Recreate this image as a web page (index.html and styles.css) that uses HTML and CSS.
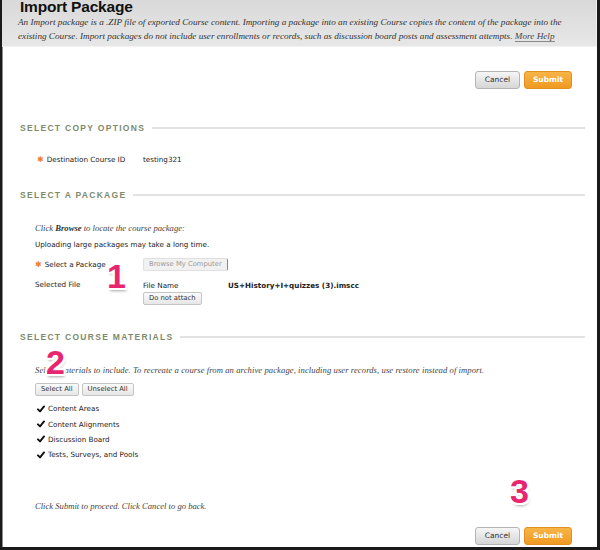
FILE: index.html
```html
<!DOCTYPE html>
<html>
<head>
<meta charset="utf-8">
<link rel="stylesheet" href="styles.css">
</head>
<body>
<div class="frame">
  <header class="head">
    <h1 class="title">Import Package</h1>
    <p class="intro">An Import package is a .ZIP file of exported Course content. Importing a package into an existing Course copies the content of the package into the<br>existing Course. Import packages do not include user enrollments or records, such as discussion board posts and assessment attempts. <span class="help">More Help</span></p>
  </header>

  <div class="actions actions-top">
    <button class="btn btn-cancel">Cancel</button>
    <button class="btn btn-submit">Submit</button>
  </div>

  <section class="step step-copy">
    <h2 class="step-title"><span class="step-text">Select Copy Options</span><span class="step-rule"></span></h2>
    <div class="row row-dest">
      <span class="label"><span class="req">&#10033;</span>Destination Course ID</span>
      <span class="value">testing321</span>
    </div>
  </section>

  <section class="step step-package">
    <h2 class="step-title"><span class="step-text">Select a Package</span><span class="step-rule"></span></h2>
    <p class="note">Click <b>Browse</b> to locate the course package:</p>
    <p class="plain">Uploading large packages may take a long time.</p>
    <div class="row row-browse">
      <span class="label"><span class="req">&#10033;</span>Select a Package</span>
      <span class="value"><button class="mini mini-disabled">Browse My Computer</button></span>
    </div>
    <div class="row row-file">
      <span class="label">Selected File</span>
      <div class="value file">
        <div class="file-line"><span class="file-head">File Name</span><span class="file-name">US+History+I+quizzes (3).imscc</span></div>
        <button class="mini">Do not attach</button>
      </div>
    </div>
    <span class="marker marker-1">1</span>
  </section>

  <section class="step step-materials">
    <h2 class="step-title"><span class="step-text">Select Course Materials</span><span class="step-rule"></span></h2>
    <p class="note note-materials">Select materials to include. To recreate a course from an archive package, including user records, use restore instead of import.</p>
    <div class="mini-group">
      <button class="mini">Select All</button><button class="mini">Unselect All</button>
    </div>
    <ul class="checks">
      <li class="check"><svg class="tick" viewBox="0 0 10 10" width="8" height="8"><path d="M1.2 5.4 L3.8 8 L8.8 1.8" fill="none" stroke="#111" stroke-width="2.4" stroke-linecap="round" stroke-linejoin="round"/></svg>Content Areas</li>
      <li class="check"><svg class="tick" viewBox="0 0 10 10" width="8" height="8"><path d="M1.2 5.4 L3.8 8 L8.8 1.8" fill="none" stroke="#111" stroke-width="2.4" stroke-linecap="round" stroke-linejoin="round"/></svg>Content Alignments</li>
      <li class="check"><svg class="tick" viewBox="0 0 10 10" width="8" height="8"><path d="M1.2 5.4 L3.8 8 L8.8 1.8" fill="none" stroke="#111" stroke-width="2.4" stroke-linecap="round" stroke-linejoin="round"/></svg>Discussion Board</li>
      <li class="check"><svg class="tick" viewBox="0 0 10 10" width="8" height="8"><path d="M1.2 5.4 L3.8 8 L8.8 1.8" fill="none" stroke="#111" stroke-width="2.4" stroke-linecap="round" stroke-linejoin="round"/></svg>Tests, Surveys, and Pools</li>
    </ul>
    <span class="marker marker-2">2</span>
  </section>

  <section class="step step-submit">
    <p class="note note-submit">Click Submit to proceed. Click Cancel to go back.</p>
    <div class="actions actions-bottom">
      <button class="btn btn-cancel">Cancel</button>
      <button class="btn btn-submit">Submit</button>
    </div>
    <span class="marker marker-3">3</span>
  </section>
</div>
</body>
</html>
```

FILE: styles.css
```css
* { box-sizing: border-box; }
html, body { margin: 0; padding: 0; background: #fff; }
body { font-family: "Liberation Sans", Arial, sans-serif; color: #222; }

.frame {
  width: 600px;
  height: 550px;
  border-left: 2px solid #1a1a1a;
  border-right: 3px solid #1a1a1a;
  border-bottom: 3px solid #1a1a1a;
  box-shadow: inset 1px 0 0 #8a8a8a;
  background: #fff;
  overflow: hidden;
}

.head {
  display: flow-root;
  height: 47px;
  background: linear-gradient(#d9d9d9, #e7e7e7);
  border-bottom: 1px solid #f2f2f2;
  border-right: 1px solid #f0f0f0;
  padding: 0 0 0 16px;
}
.title {
  margin: -1px 0 0 2px;
  font-family: "Liberation Sans", Arial, sans-serif;
  font-weight: bold;
  font-size: 15.5px;
  letter-spacing: -0.2px;
  line-height: 16px;
  color: #111;
}
.intro {
  margin: 0;
  font-family: "Liberation Serif", serif;
  font-style: italic;
  font-size: 9.2px;
  line-height: 14px;
  color: #333;
}
.help { color: #444; border-bottom: 1px solid #888; }

.actions { display: flex; justify-content: flex-end; gap: 4px; padding-right: 25px; }
.actions-top { padding-top: 24px; }
.btn {
  height: 18px;
  padding: 0;
  border-radius: 3px;
  font-family: "DejaVu Sans", sans-serif;
  font-size: 7.5px;
  line-height: 16px;
}
.btn-cancel {
  width: 45px;
  border: 1px solid #b5b5b5;
  background: linear-gradient(#f6f6f6, #d6d6d6);
  color: #333;
}
.btn-submit {
  width: 48px;
  border: 1px solid #e49020;
  background: linear-gradient(#f7b447, #ef9a22);
  color: #fff;
  font-weight: bold;
}

.step { position: relative; }
.step-title {
  display: flex;
  align-items: center;
  gap: 7px;
  margin: 0;
  padding: 0 12px 0 18px;
  height: 12px;
  font-family: "Liberation Sans", Arial, sans-serif;
  font-size: 8.5px;
  font-weight: bold;
  letter-spacing: 1.3px;
  text-transform: uppercase;
  color: #7e8a6c;
}
.step-rule { flex: 1; height: 2px; background: #e2e2e2; }
.step-copy .step-title { margin-top: 33px; }
.step-package .step-title { margin-top: 24px; }
.step-materials .step-title { margin-top: 26px; }

.row {
  display: flex;
  align-items: center;
  padding-left: 33px;
  font-family: "DejaVu Sans", sans-serif;
  font-size: 7.2px;
  color: #222;
}
.label { width: 108px; flex: none; }
.req { color: #f0812a; font-size: 8px; margin-right: 3px; }
.row-dest { margin-top: 19px; height: 12px; padding-left: 35px; }
.row-dest .label { width: 106px; }
.row-browse { margin-top: 6px; height: 14px; }
.row-file { margin-top: 8px; align-items: flex-start; }
.row-file .label { padding-top: 1px; }
.file-line { display: flex; height: 12px; align-items: center; }
.file-head { width: 85px; }
.file-name { font-weight: bold; }
.file .mini { margin-top: 1px; }

.note {
  margin: 21px 0 0 33px;
  font-family: "Liberation Serif", serif;
  font-style: italic;
  font-size: 8.6px;
  line-height: 12px;
  color: #444;
}
.note-materials { letter-spacing: 0.08px; }
.note b { font-style: italic; font-weight: bold; color: #333; }
.plain {
  margin: 5px 0 0 33px;
  font-family: "DejaVu Sans", sans-serif;
  font-size: 7.2px;
  line-height: 12px;
  color: #222;
}

.mini {
  height: 13px;
  padding: 0 5px;
  border: 1px solid #c4c4c4;
  border-radius: 2px;
  background: linear-gradient(#fbfbfb, #e6e6e6);
  font-family: "DejaVu Sans", sans-serif;
  font-size: 6.8px;
  line-height: 11px;
  color: #333;
}
.mini-disabled {
  color: #9a9a9a;
  background: #f1f1f1;
  border-color: #e0e0e0;
  border-right: 1px solid #888;
}

.mini-group { display: flex; gap: 3px; margin: 7px 0 0 33px; }
.checks { list-style: none; margin: 5px 0 0 35px; padding: 0; }
.check {
  display: flex;
  align-items: center;
  gap: 3px;
  height: 15.4px;
  font-family: "DejaVu Sans", sans-serif;
  font-size: 7.2px;
  color: #222;
}

.note-submit { margin-top: 37px; }
.actions-bottom { margin-top: 15px; }

.marker {
  position: absolute;
  font-family: "Liberation Sans", Arial, sans-serif;
  font-weight: bold;
  font-size: 34px;
  line-height: 1;
  color: #e8266f;
  text-shadow:
    -2px 0 #fff, 2px 0 #fff, 0 -2px #fff, 0 2px #fff,
    -2px -2px #fff, 2px -2px #fff, -2px 2px #fff, 2px 2px #fff,
    1px 3px 3px rgba(0,0,0,0.35);
}
.marker-1 { left: 105px; top: 70px; }
.marker-2 { left: 44px; top: 14px; }
.marker-3 { left: 508px; top: -26px; }
```
